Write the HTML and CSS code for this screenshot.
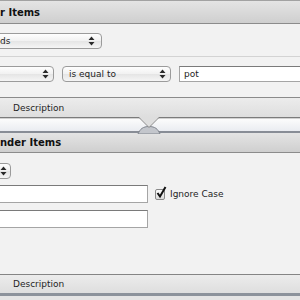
FILE: index.html
```html
<!DOCTYPE html>
<html lang="en">
<head>
    <meta charset="UTF-8">
    <title>Workflow</title>
    <link rel="stylesheet" href="styles.css">
</head>
<body>
    <div class="workflow">
        <!-- first action -->
        <section class="action">
            <div class="action-head"><span class="title">r Items</span></div>
            <div class="action-body">
                <div class="row">
                    <div class="popup popup-where"><span class="popup-label">ds</span><svg class="arrows" width="7" height="10" viewBox="0 0 7 10"><path d="M3.5 0.5 L6.5 4 L0.5 4 Z M0.5 6 L6.5 6 L3.5 9.5 Z" fill="#2a2a2a"/></svg></div>
                </div>
                <div class="row row-last">
                    <div class="popup popup-attr"><span class="popup-label"></span><svg class="arrows" width="7" height="10" viewBox="0 0 7 10"><path d="M3.5 0.5 L6.5 4 L0.5 4 Z M0.5 6 L6.5 6 L3.5 9.5 Z" fill="#2a2a2a"/></svg></div>
                    <div class="popup popup-op"><span class="popup-label">is equal to</span><svg class="arrows" width="7" height="10" viewBox="0 0 7 10"><path d="M3.5 0.5 L6.5 4 L0.5 4 Z M0.5 6 L6.5 6 L3.5 9.5 Z" fill="#2a2a2a"/></svg></div>
                    <div class="field field-value">pot</div>
                </div>
            </div>
            <div class="action-foot">Description</div>
        </section>

        <div class="connector">
            <svg class="notch" width="30" height="17" viewBox="0 0 30 17">
                <path d="M4 17 C6 12 9 9.5 15 9.5 C21 9.5 24 12 26 17 Z" fill="#c3c6cc" stroke="#7f848d" stroke-width="1"/>
                <polygon points="5,0 15,10.5 25,0" fill="#dedede"/>
                <polyline points="5.5,1 15,10.5 24.5,1" fill="none" stroke="#8a8a8a" stroke-width="1"/>
            </svg>
        </div>

        <!-- second action -->
        <section class="action">
            <div class="action-head action-head-joined"><span class="title">nder Items</span></div>
            <div class="action-body action-body-tall">
                <div class="popup popup-search"><span class="popup-label"></span><svg class="arrows" width="7" height="10" viewBox="0 0 7 10"><path d="M3.5 0.5 L6.5 4 L0.5 4 Z M0.5 6 L6.5 6 L3.5 9.5 Z" fill="#2a2a2a"/></svg></div>
                <div class="line">
                    <div class="field field-wide"></div>
                    <label class="check">
                        <span class="box"><svg width="12" height="14" viewBox="0 0 12 14"><path d="M2.5 7 L5 10.5 L10.5 1" fill="none" stroke="#111" stroke-width="2"/></svg></span>
                        Ignore Case
                    </label>
                </div>
                <div class="line">
                    <div class="field field-wide"></div>
                </div>
            </div>
            <div class="action-foot action-foot-end">Description</div>
        </section>
    </div>
</body>
</html>
```

FILE: styles.css
```css
body {
    margin: 0;
    width: 300px;
    height: 300px;
    overflow: hidden;
    background: #e4e4e4;
    font-family: "DejaVu Sans", sans-serif;
    font-size: 9px;
    color: #1e1e1e;
}

.workflow {
    width: 300px;
}

.action-head {
    height: 22px;
    border-top: 1px solid #a2a2a2;
    border-bottom: 1px solid #8c8c8c;
    background: linear-gradient(#e4e4e4, #cfcfcf);
    display: flex;
    align-items: center;
    white-space: nowrap;
    overflow: hidden;
}

.action-head-joined {
    height: 19px;
    border-top: none;
}

.title {
    font-weight: bold;
    font-size: 10px;
    color: #111;
}

.action-body {
    background: #f2f2f2;
}

.row {
    display: flex;
    align-items: center;
    padding: 9px 0 7px;
    border-bottom: 1px solid #d3d3d3;
}

.row-last {
    padding-bottom: 15px;
    border-bottom: none;
}

.popup {
    box-sizing: border-box;
    height: 16px;
    border: 1px solid #9b9b9b;
    border-radius: 4px;
    background: linear-gradient(#fefefe, #f1f1f1 50%, #e5e5e5 52%, #f5f5f5);
    display: flex;
    align-items: center;
    padding-left: 6px;
    flex-shrink: 0;
}

.popup-label {
    flex: 1;
    white-space: nowrap;
}

.arrows {
    margin-right: 4px;
}

.popup-where {
    margin-left: -7px;
    width: 109px;
}

.popup-where .arrows {
    margin-right: 6px;
}

.popup-attr {
    margin-left: -7px;
    width: 61px;
}

.popup-op {
    margin-left: 8px;
    width: 109px;
}

.field {
    box-sizing: border-box;
    height: 16px;
    background: #fff;
    border: 1px solid #a5a5a5;
    border-top-color: #7a7a7a;
    padding-left: 4px;
    line-height: 14px;
}

.field-value {
    flex: 1;
    margin-left: 8px;
    margin-right: -10px;
}

.action-foot {
    height: 19px;
    border-top: 1px solid #8b8b8b;
    border-bottom: 1px solid #7b7b7b;
    background: linear-gradient(#ececec, #dedede);
    padding-left: 13px;
    display: flex;
    align-items: center;
}

.action-foot-end {
    height: 18px;
    border-top-color: #858585;
    border-bottom: 3px solid #8c929b;
}

.connector {
    position: relative;
    height: 12px;
    border-top: 1px solid #d2d2d2;
    border-bottom: 2px solid #888d96;
    background: linear-gradient(#fcfcfc, #eaecf1);
}

.notch {
    position: absolute;
    left: 134px;
    top: -2px;
}

.action-body-tall {
    padding: 10px 0 46px;
}

.popup-search {
    margin-left: -7px;
    width: 18px;
    padding-left: 0;
}

.popup-search .arrows {
    margin-right: 3px;
}

.line {
    display: flex;
    align-items: center;
    margin-top: 6px;
}

.line + .line {
    margin-top: 7px;
}

.field-wide {
    height: 18px;
    width: 154px;
    margin-left: -6px;
    flex-shrink: 0;
}

.check {
    display: flex;
    align-items: center;
    margin-left: 7px;
    white-space: nowrap;
}

.box {
    position: relative;
    box-sizing: border-box;
    width: 10px;
    height: 11px;
    border: 1px solid #8a8a8a;
    border-radius: 2px;
    background: linear-gradient(#fafafa, #dcdcdc);
    margin-right: 5px;
}

.box svg {
    position: absolute;
    left: -1px;
    top: -4px;
}
```
